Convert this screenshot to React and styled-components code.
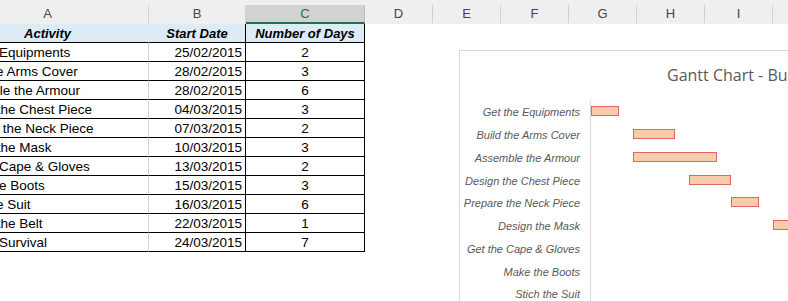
import React from "react";
import styled, { createGlobalStyle } from "styled-components";

const tasks = [
  { name: "Get the Equipments", start: "25/02/2015", days: 2 },
  { name: "Build the Arms Cover", start: "28/02/2015", days: 3 },
  { name: "Assemble the Armour", start: "28/02/2015", days: 6 },
  { name: "Design the Chest Piece", start: "04/03/2015", days: 3 },
  { name: "Prepare the Neck Piece", start: "07/03/2015", days: 2 },
  { name: "Design the Mask", start: "10/03/2015", days: 3 },
  { name: "Get the Cape & Gloves", start: "13/03/2015", days: 2 },
  { name: "Make the Boots", start: "15/03/2015", days: 3 },
  { name: "Stich the Suit", start: "16/03/2015", days: 6 },
  { name: "Design the Belt", start: "22/03/2015", days: 1 },
  { name: "Test for Survival", start: "24/03/2015", days: 7 },
];

const columns = [
  { key: "A", width: 202 },
  { key: "B", width: 97 },
  { key: "C", width: 119, selected: true },
  { key: "D", width: 68 },
  { key: "E", width: 68 },
  { key: "F", width: 68 },
  { key: "G", width: 68 },
  { key: "H", width: 68 },
  { key: "I", width: 68 },
  { key: "J", width: 68 },
];

const DAY_PX = 14;

const toDay = (s) => {
  const [d, m, y] = s.split("/").map(Number);
  return Date.UTC(y, m - 1, d) / 86400000;
};
const firstDay = toDay(tasks[0].start);

const GlobalStyle = createGlobalStyle`
  html, body { margin: 0; padding: 0; background: #fff; }
  body { font-family: "Liberation Sans", Arial, sans-serif; }
`;

const Page = styled.div`
  width: 788px;
  height: 301px;
  overflow: hidden;
  background: #fff;
`;

const ColumnBar = styled.div`
  display: flex;
  margin-left: -53px;
  padding-top: 5px;
  background: #efefef;
  width: max-content;
`;

const ColumnHead = styled.div`
  flex: none;
  box-sizing: border-box;
  height: 19px;
  display: flex;
  align-items: center;
  justify-content: center;
  font-size: 13px;
  color: ${(p) => (p.$selected ? "#217346" : "#444")};
  background: ${(p) => (p.$selected ? "#d2d2d2" : "#efefef")};
  border-right: 1px solid ${(p) => (p.$selected ? "#bdbdbd" : "#d0d0d0")};
  border-bottom: 2px solid ${(p) => (p.$selected ? "#217346" : "#efefef")};
`;

const Body = styled.div`
  display: flex;
  align-items: flex-start;
`;

const Sheet = styled.div`
  flex: none;
  margin-left: -53px;
  display: grid;
  grid-template-columns: 202px 97px 119px;
`;

const Cell = styled.div`
  box-sizing: border-box;
  height: 19px;
  display: flex;
  align-items: center;
  white-space: nowrap;
  overflow: hidden;
  font-size: ${(p) => (p.$head ? "13px" : "13.5px")};
  font-weight: ${(p) => (p.$head ? 700 : 400)};
  font-style: ${(p) => (p.$head ? "italic" : "normal")};
  color: #000;
  background: ${(p) => (p.$head ? "#ddebf7" : "#fff")};
  border-bottom: 1px solid #000;
  border-right: 1px solid ${(p) => (p.$grid ? (p.$head ? "#ddebf7" : "#d4d4d4") : "#000")};
  justify-content: ${(p) => p.$align || "flex-start"};
  padding: ${(p) => (p.$align === "flex-start" ? "0 0 0 4px" : "0 3px")};
`;

const Chart = styled.div`
  flex: none;
  margin: 26px 0 0 94px;
  width: 400px;
  height: 260px;
  border-top: 1px solid #d9d9d9;
  border-left: 1px solid #d9d9d9;
  background: #fff;
`;

const ChartTitle = styled.div`
  padding: 13px 0 0 207px;
  height: 24px;
  font-family: "Open Sans", "Liberation Sans", sans-serif;
  font-size: 16px;
  color: #595959;
  white-space: nowrap;
`;

const Plot = styled.div`
  margin-top: 13px;
  display: flex;
  flex-direction: column;
`;

const PlotRow = styled.div`
  display: flex;
  height: 22.75px;
  align-items: stretch;
`;

const Label = styled.div`
  flex: none;
  width: 120px;
  margin-right: 10px;
  display: flex;
  align-items: center;
  justify-content: flex-end;
  font-size: 11px;
  font-style: italic;
  color: #595959;
  white-space: nowrap;
`;

const Track = styled.div`
  flex: 1;
  display: flex;
  align-items: center;
  border-left: 1px solid #d9d9d9;
`;

const Bar = styled.div`
  flex: none;
  box-sizing: border-box;
  height: 10px;
  margin-top: -2px;
  background: #f8cbad;
  border: 1px solid #e06666;
`;

export default function App() {
  return (
    <Page>
      <GlobalStyle />
      <ColumnBar>
        {columns.map((c) => (
          <ColumnHead key={c.key} $selected={c.selected} style={{ width: c.width }}>
            {c.key}
          </ColumnHead>
        ))}
      </ColumnBar>
      <Body>
        <Sheet>
          <Cell $head $grid $align="center">Activity</Cell>
          <Cell $head $align="center">Start Date</Cell>
          <Cell $head $align="center">Number of Days</Cell>
          {tasks.map((t) => (
            <React.Fragment key={t.name}>
              <Cell $grid $align="flex-start">{t.name}</Cell>
              <Cell $align="flex-end">{t.start}</Cell>
              <Cell $align="center">{t.days}</Cell>
            </React.Fragment>
          ))}
        </Sheet>
        <Chart>
          <ChartTitle>Gantt Chart - Building the Suit</ChartTitle>
          <Plot>
            {tasks.map((t) => (
              <PlotRow key={t.name}>
                <Label>{t.name}</Label>
                <Track>
                  <Bar
                    style={{
                      marginLeft: (toDay(t.start) - firstDay) * DAY_PX,
                      width: t.days * DAY_PX,
                    }}
                  />
                </Track>
              </PlotRow>
            ))}
          </Plot>
        </Chart>
      </Body>
    </Page>
  );
}
